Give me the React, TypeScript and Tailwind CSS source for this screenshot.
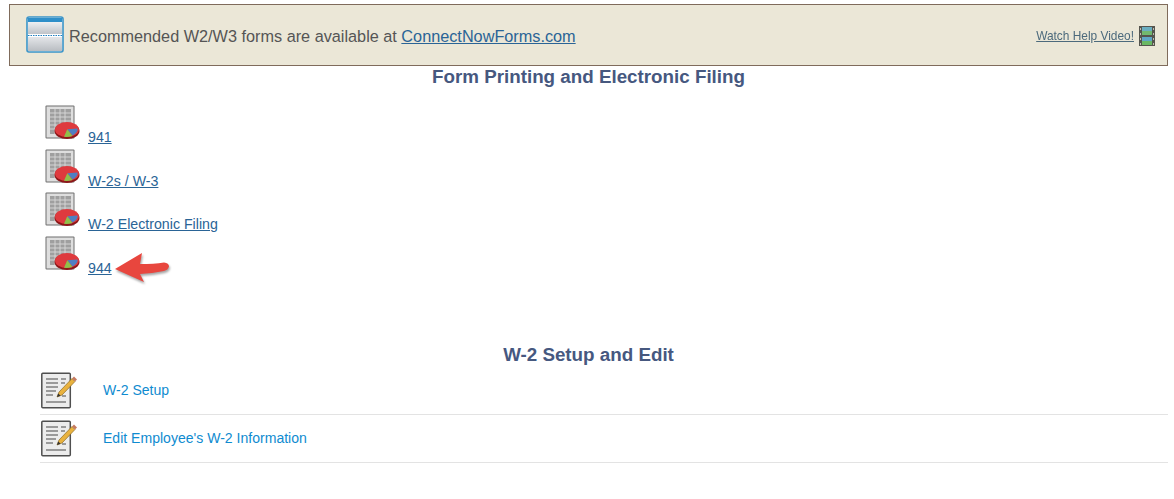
import React from 'react';

const font = { fontFamily: '"Liberation Sans", Arial, sans-serif' };

const CalendarIcon = () => (
  <svg width="38" height="37" viewBox="0 0 38 37" className="shrink-0 mb-[2px]">
    <defs>
      <linearGradient id="calTop" x1="0" y1="0" x2="0" y2="1">
        <stop offset="0" stopColor="#eef0f2" />
        <stop offset="1" stopColor="#bfc3c8" />
      </linearGradient>
      <linearGradient id="calBottom" x1="0" y1="0" x2="0" y2="1">
        <stop offset="0" stopColor="#e4e6e9" />
        <stop offset="1" stopColor="#b9bdc2" />
      </linearGradient>
    </defs>
    <rect x="1" y="1" width="36" height="35" rx="2" fill="#fff" stroke="#3a94c8" strokeWidth="1.6" />
    <rect x="2" y="2" width="34" height="4" fill="#2f8fc9" />
    <rect x="2" y="6" width="34" height="12" fill="url(#calTop)" />
    <rect x="2" y="18" width="34" height="3" fill="#fff" />
    <rect x="2" y="21" width="34" height="14" fill="url(#calBottom)" />
    <line x1="2" y1="19.5" x2="36" y2="19.5" stroke="#1f7fc0" strokeWidth="1" strokeDasharray="1.5 1" />
  </svg>
);

const FilmIcon = () => (
  <svg width="16" height="20" viewBox="0 0 16 20" className="shrink-0 mt-[1px]">
    <rect x="0" y="0" width="16" height="20" fill="#55554e" />
    <rect x="3" y="1" width="10" height="8" fill="#6aaec0" />
    <rect x="3" y="5" width="10" height="4" fill="#72b86e" />
    <rect x="3" y="11" width="10" height="8" fill="#5ea6c6" />
    <rect x="3" y="15" width="10" height="4" fill="#6ab864" />
    <rect x="1" y="2" width="1" height="2" fill="#bdbdb2" />
    <rect x="1" y="7" width="1" height="2" fill="#bdbdb2" />
    <rect x="1" y="12" width="1" height="2" fill="#bdbdb2" />
    <rect x="1" y="17" width="1" height="2" fill="#bdbdb2" />
    <rect x="14" y="2" width="1" height="2" fill="#bdbdb2" />
    <rect x="14" y="7" width="1" height="2" fill="#bdbdb2" />
    <rect x="14" y="12" width="1" height="2" fill="#bdbdb2" />
    <rect x="14" y="17" width="1" height="2" fill="#bdbdb2" />
  </svg>
);

const ReportIcon = () => (
  <svg width="36" height="37" viewBox="0 0 36 37" className="shrink-0">
    <rect x="0.5" y="0.5" width="29" height="33" rx="1" fill="#6f6f6f" />
    <rect x="1.5" y="1.5" width="27" height="31" fill="#dedede" />
    <rect x="5" y="4" width="21" height="25" fill="#9f9f9f" />
    <g stroke="#d9d9d9" strokeWidth="0.9">
      <line x1="5" y1="8" x2="26" y2="8" />
      <line x1="5" y1="12" x2="26" y2="12" />
      <line x1="5" y1="16" x2="26" y2="16" />
      <line x1="5" y1="20" x2="26" y2="20" />
      <line x1="5" y1="24" x2="26" y2="24" />
      <line x1="10" y1="4" x2="10" y2="29" />
      <line x1="15" y1="4" x2="15" y2="29" />
      <line x1="20" y1="4" x2="20" y2="29" />
    </g>
    <ellipse cx="22" cy="26" rx="12.5" ry="8" fill="#8c1719" />
    <ellipse cx="22" cy="24.5" rx="12" ry="7.5" fill="#de3a3e" />
    <path d="M22.3 24.3 L32.5 23.5 Q33.5 27 27.5 30.5 Z" fill="#4f7fc2" />
    <path d="M22.3 24.3 L19 31.8 Q23 32.3 27.5 31 Z" fill="#8fc04a" />
  </svg>
);

const EditIcon = () => (
  <svg width="36" height="37" viewBox="0 0 36 37" className="shrink-0">
    <rect x="0.8" y="1.2" width="28.5" height="34.5" rx="1" fill="#ececec" stroke="#4f4f4f" strokeWidth="1.5" />
    <g stroke="#9a9a9a" strokeWidth="2">
      <line x1="5" y1="7" x2="17" y2="7" />
      <line x1="5" y1="11" x2="17" y2="11" />
      <line x1="5" y1="15" x2="17" y2="15" />
      <line x1="5" y1="19" x2="15" y2="19" />
      <line x1="5" y1="23" x2="12" y2="23" />
      <line x1="5" y1="30" x2="25" y2="30" />
      <line x1="20" y1="7" x2="25" y2="7" />
      <line x1="20" y1="11" x2="24" y2="11" />
      <line x1="21" y1="24" x2="25" y2="24" />
    </g>
    <path d="M18 20 L31 6.5 L34 9.5 L21 23 L16 25 Z" fill="#e9b23e" stroke="#8d6a24" strokeWidth="0.7" />
    <path d="M31 6.5 L33 4.5 L36 7.5 L34 9.5 Z" fill="#c57a60" />
    <path d="M16 25 L17.2 21.5 L19.6 23.8 Z" fill="#333" />
  </svg>
);

const RedArrow = () => (
  <svg
    width="62"
    height="38"
    viewBox="0 0 62 38"
    className="absolute left-[112px] top-[250px] drop-shadow-[1px_2px_1px_rgba(0,0,0,0.35)]"
  >
    <path d="M3 19 L30 3 L28 14 Q42 14 52 12.5 Q57 13 57 16.5 Q56 20 52 21 Q40 23.5 28 24 L32 32 Z" fill="#e8463e" />
  </svg>
);

const formLinks = ['941', 'W-2s / W-3', 'W-2 Electronic Filing', '944'];
const setupLinks = ['W-2 Setup', "Edit Employee's W-2 Information"];

export default function App() {
  return (
    <div className="relative w-[1174px] h-[499px] overflow-hidden bg-white pt-1 pl-[9px] pr-[6px]" style={font}>
      <div className="h-[62px] flex items-center justify-between border border-[#7f6b5b] bg-[#ebe7d7] pl-[16px] pr-[12px]">
        <div className="flex items-center gap-[5px] text-[16.25px] text-[#555555]">
          <CalendarIcon />
          <span className="pt-[2px]">
            Recommended W2/W3 forms are available at{' '}
            <a href="#" className="text-[#2a6496] underline">ConnectNowForms.com</a>
          </span>
        </div>
        <div className="flex items-center gap-[5px]">
          <a href="#" className="mt-[3px] text-[11.9px] text-[#4c6a7c] underline blur-[0.4px]">Watch Help Video!</a>
          <FilmIcon />
        </div>
      </div>

      <h2 className="mt-[1px] text-center text-[18.8px] leading-[20px] font-bold text-[#46587f]">
        Form Printing and Electronic Filing
      </h2>

      <div className="mt-[11.3px] ml-[36px] flex flex-col">
        {formLinks.map((label) => (
          <div key={label} className="h-[43.67px] flex items-end gap-[7px]">
            <ReportIcon />
            <a href="#" className="text-[14.2px] leading-[16px] mb-[-3px] text-[#2a6496] underline">{label}</a>
          </div>
        ))}
      </div>

      <h2 className="mt-[71.7px] text-center text-[18.8px] leading-[20px] font-bold text-[#46587f]">
        W-2 Setup and Edit
      </h2>

      <div className="mt-[2px] ml-[31px] flex flex-col">
        {setupLinks.map((label) => (
          <div key={label} className="h-[48px] flex items-center border-b border-[#e3e3e3] pl-[1px]">
            <div className="w-[62px]"><EditIcon /></div>
            <a href="#" className="text-[14.05px] text-[#0f8bd0]">{label}</a>
          </div>
        ))}
      </div>

      <RedArrow />
    </div>
  );
}
